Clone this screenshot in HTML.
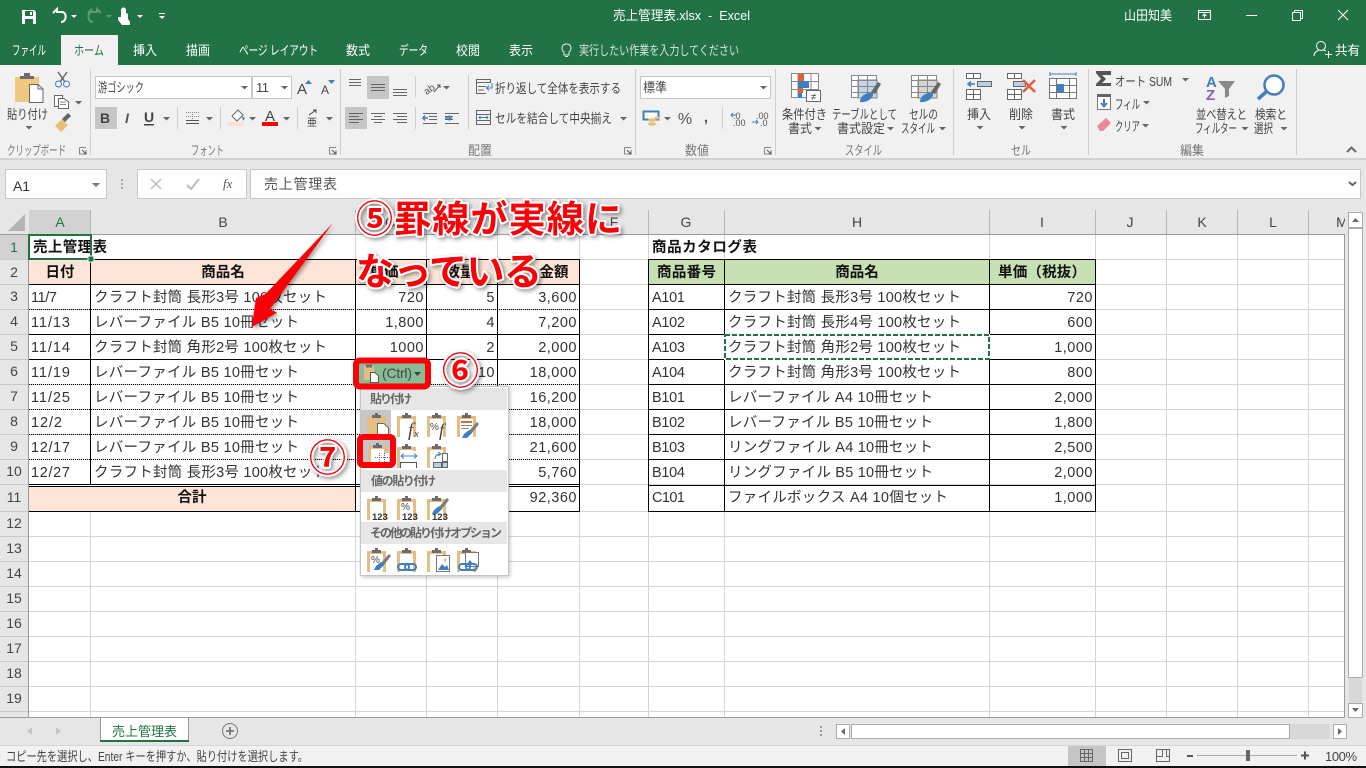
<!DOCTYPE html>
<html lang="ja"><head><meta charset="utf-8"><title>売上管理表.xlsx - Excel</title>
<style>
html,body{margin:0;padding:0;width:1366px;height:768px;overflow:hidden;background:#fff}
svg{display:block;position:absolute;left:0;top:0}
text{font-family:"Liberation Sans","Noto Sans CJK JP",sans-serif;white-space:pre}
.c{font-size:14.5px;fill:#333}
.b{font-size:14.5px;font-weight:700;fill:#111}
.m{text-anchor:middle}
.e{text-anchor:end;letter-spacing:.5px}
.h{font-size:14px;fill:#444;text-anchor:middle}
.r{font-size:13px;fill:#444}
.g{font-size:13px;fill:#777}
.w{font-size:13px;fill:#fff}
.p{font-size:12px;font-weight:700;fill:#666}
.an{font-weight:700;fill:#fb0007;stroke:#fff;stroke-width:4px;paint-order:stroke;stroke-linejoin:round;filter:drop-shadow(2px 2px 2px rgba(0,0,0,.4))}
.sep{stroke:#cfcfcf;stroke-width:1}
</style></head><body>
<svg width="1366" height="768" viewBox="0 0 1366 768" xmlns="http://www.w3.org/2000/svg">
<defs>
<polygon id="ar" points="-3.5,0 3.5,0 0,3.5" fill="#666"/>
<g id="cb"><rect x="0" y="3" width="19" height="21" fill="#e3bd84"/><rect x="3" y="6" width="13" height="18" fill="#fff"/><path d="M5 5V2H8V0H11V2H14V5Z" fill="#6b6b6b"/></g>
<g id="cbt"><rect x="0" y="3" width="19" height="21" fill="#e3bd84"/><path d="M5 5V2H8V0H11V2H14V5Z" fill="#6b6b6b"/></g>
<g id="br"><path d="M0 10L9 0L11 2L3 12Z" fill="#7a7a7a"/><path d="M-4 12L1 8L4 11L-1 16H-6Z" fill="#3f7fbf"/></g>
<g id="lk"><rect x="0" y="0" width="11" height="6" rx="3" fill="none" stroke="#3f7fbf" stroke-width="2"/><rect x="7" y="0" width="11" height="6" rx="3" fill="none" stroke="#3f7fbf" stroke-width="2"/></g>
</defs>

<!-- base -->
<rect width="1366" height="768" fill="#fff"/>
<rect width="1366" height="65" fill="#217346"/>
<rect y="65" width="1366" height="93" fill="#f1f1f1"/>
<rect y="158" width="1366" height="2" fill="#d2d2d2"/>
<rect y="160" width="1366" height="74" fill="#e6e6e6"/>

<!-- title bar -->
<path d="M22 10H34L36 12V24H22ZM25 11V16H33V11ZM25 19V24H33V19ZM30 12H32V15H30Z" fill-rule="evenodd" fill="#fff"/>
<path d="M53 13L57 9V12H62C67 12 67 22 61 22" fill="none" stroke="#fff" stroke-width="2"/>
<polygon points="71,15 77,15 74,18" fill="#fff"/>
<path d="M88 13L92 9" fill="none" stroke="#5d9a78" stroke-width="2"/><path d="M101 13L97 9V12H92C87 12 87 22 93 22" fill="none" stroke="#5d9a78" stroke-width="2"/>
<polygon points="106,15 112,15 109,18" fill="#5d9a78"/>
<path d="M121 17V10a2.5 2.5 0 0 1 5 0V13L128 14V19L130 22V25H122L118 20V17Z" fill="#fff"/>
<polygon points="137,15 143,15 140,18" fill="#fff"/>
<rect x="159" y="13" width="6" height="1" fill="#fff"/><polygon points="159,16 165,16 162,19" fill="#fff"/>
<text x="613" y="20" class="w" textLength="137" lengthAdjust="spacingAndGlyphs">売上管理表.xlsx  -  Excel</text>
<text x="1124" y="20" class="w" textLength="48" lengthAdjust="spacingAndGlyphs">山田知美</text>
<g fill="none" stroke="#fff" stroke-width="1">
<rect x="1198.500" y="10.500" width="12" height="9"/><path d="M1198 12.500H1211M1204.500 18V14.500M1202.500 16L1204.500 14L1206.500 16"/>
<path d="M1246 15.500H1257"/>
<rect x="1292.500" y="12.500" width="8" height="8"/><path d="M1294.500 12V10.500H1302.500V18.500H1301"/>
<path d="M1338 10L1348 20M1348 10L1338 20"/>
</g>

<!-- tabs -->
<rect x="61" y="35" width="57" height="30" fill="#f1f1f1"/>
<text x="12" y="55" class="w" textLength="34" lengthAdjust="spacingAndGlyphs">ファイル</text>
<text x="74" y="55" class="r" style="fill:#217346" textLength="30" lengthAdjust="spacingAndGlyphs">ホーム</text>
<text x="133" y="55" class="w" textLength="24" lengthAdjust="spacingAndGlyphs">挿入</text>
<text x="186" y="55" class="w" textLength="24" lengthAdjust="spacingAndGlyphs">描画</text>
<text x="239" y="55" class="w" textLength="79" lengthAdjust="spacingAndGlyphs">ページ レイアウト</text>
<text x="346" y="55" class="w" textLength="24" lengthAdjust="spacingAndGlyphs">数式</text>
<text x="399" y="55" class="w" textLength="29" lengthAdjust="spacingAndGlyphs">データ</text>
<text x="456" y="55" class="w" textLength="24" lengthAdjust="spacingAndGlyphs">校閲</text>
<text x="509" y="55" class="w" textLength="24" lengthAdjust="spacingAndGlyphs">表示</text>
<text x="579" y="55" class="w" style="fill:#d3e4da" textLength="160" lengthAdjust="spacingAndGlyphs">実行したい作業を入力してください</text>
<text x="1335" y="55" class="w" textLength="25" lengthAdjust="spacingAndGlyphs">共有</text>
<path d="M564 55V52C561 50 561 44 566.500 44C572 44 572 50 569 52V55ZM565 56.500H568" fill="none" stroke="#e6f0ea" stroke-width="1"/>
<g fill="none" stroke="#fff" stroke-width="1"><circle cx="1321" cy="46" r="4.500"/><path d="M1314 56C1314 52 1317 51 1319 50M1323 50L1326 51M1325 54.500H1332M1328.500 51V58"/></g>

<!-- ribbon separators -->
<g class="sep" shape-rendering="crispEdges">
<path d="M90.500 69V155M340.500 69V155M635.500 69V155M775.500 69V155M953.500 69V155M1088.500 69V155M1296.500 69V155"/>
<path d="M177.500 107V129M220.500 107V129M297.500 107V129M415.500 76V98M415.500 107V129M468.500 75V130M722.500 107V129"/>
</g>

<!-- clipboard group -->
<rect x="15" y="77" width="24" height="25" fill="#f0c97f"/>
<path d="M20 79V76H24V73H30V76H34V79Z" fill="#6b6b6b"/>
<path d="M29.500 84.500H38L43 89V102.500H29.500Z" fill="#fff" stroke="#666"/>
<path d="M38 84.500V89H43" fill="none" stroke="#666"/>
<text x="7" y="119" class="r" textLength="41" lengthAdjust="spacingAndGlyphs">貼り付け</text>
<use href="#ar" x="29" y="126"/>
<g fill="none" stroke="#666"><path d="M58 72L65 82M67 72L60 82" stroke-width="1.500"/><circle cx="58.500" cy="84" r="3" stroke="#3f7fbf"/><circle cx="66.500" cy="84" r="3" stroke="#3f7fbf"/></g>
<g fill="#fff" stroke="#666"><rect x="54.500" y="95.500" width="8" height="11"/><path d="M58.500 98.500H64L68.500 102V108.500H58.500Z"/><path d="M60 102H66M60 104.500H66" stroke-width=".8"/></g>
<use href="#ar" x="78.500" y="101"/>
<path d="M55 126L62 119L68 125L61 132Z" fill="#e8bf7a"/><path d="M62 119L68 113L71 116L65 122Z" fill="#666"/>
<text x="7" y="155" class="g" textLength="59" lengthAdjust="spacingAndGlyphs">クリップボード</text>
<g id="lnch" fill="none" stroke="#888"><path d="M79.500 147.500H86M79.500 147.500V154H86V150"/><path d="M82 150L86 154M83.500 154H86V151.500" stroke="#555"/></g>
<use href="#lnch" x="250"/><use href="#lnch" x="545"/><use href="#lnch" x="685"/>

<!-- font group -->
<rect x="95.500" y="76.500" width="156" height="22" fill="#fff" stroke="#c6c6c6"/>
<rect x="252.500" y="76.500" width="39" height="22" fill="#fff" stroke="#c6c6c6"/>
<text x="98" y="92" class="r" textLength="46" lengthAdjust="spacingAndGlyphs">游ゴシック</text>
<use href="#ar" x="244.500" y="86"/>
<text x="256" y="92" class="r" style="font-size:13px" textLength="13">11</text>
<use href="#ar" x="284.500" y="86"/>
<text x="297" y="94" style="font-size:15px;fill:#444">A</text><polygon points="305,84 312,84 308.500,80" fill="#3f7fbf"/>
<text x="321" y="94" style="font-size:12px;fill:#444">A</text><polygon points="328,80 335,80 331.500,84" fill="#3f7fbf"/>
<rect x="95" y="107" width="22" height="22" fill="#c6c6c6"/>
<text x="105" y="123" class="m" style="font-size:14px;font-weight:700;fill:#444">B</text>
<text x="127" y="123" class="m" style="font-size:14px;font-style:italic;font-weight:700;fill:#555">I</text>
<text x="149" y="122" class="m" style="font-size:14px;font-weight:700;fill:#444">U</text><rect x="144" y="124" width="10" height="1.500" fill="#444"/>
<use href="#ar" x="166.500" y="117"/>
<g fill="none" stroke="#888" stroke-dasharray="1 1"><path d="M186 112.500H199M186 116.500H199M192.500 112V120"/></g><path d="M186 120.500H199M186 123.500H199" stroke="#555" fill="none"/>
<use href="#ar" x="209.500" y="117"/>
<path d="M232 116L238 110L243 115L237 121Z" fill="#fff" stroke="#666"/><path d="M242 116L245 118L243 121Z" fill="#3f7fbf"/><rect x="228" y="122" width="16" height="4" fill="#fbe1d2"/>
<use href="#ar" x="252.500" y="117"/>
<text x="270" y="121" class="m" style="font-size:15px;fill:#444">A</text><rect x="262" y="122" width="16" height="4" fill="#f00"/>
<use href="#ar" x="286.500" y="117"/>
<text x="312" y="126" class="m" style="font-size:10px;fill:#444">亜</text><path d="M309 115L316 110M313 110H316V113" fill="none" stroke="#444"/>
<use href="#ar" x="329.500" y="117"/>
<text x="191" y="155" class="g" textLength="33" lengthAdjust="spacingAndGlyphs">フォント</text>

<!-- alignment -->
<rect x="367" y="76" width="22" height="23" fill="#c6c6c6"/>
<rect x="345" y="107" width="22" height="22" fill="#c6c6c6"/>
<g stroke="#666" fill="none" shape-rendering="crispEdges">
<path d="M349 79.500H361M349 82.500H361M349 85.500H361"/>
<path d="M371 84.500H385M371 87.500H385M371 90.500H385"/>
<path d="M393 89.500H407M393 92.500H407M393 95.500H407"/>
<path d="M349 113.500H363M349 116.500H359M349 119.500H363M349 122.500H359"/>
<path d="M371 113.500H385M374 116.500H382M371 119.500H385M374 122.500H382"/>
<path d="M393 113.500H407M397 116.500H407M393 119.500H407M397 122.500H407"/>
<path d="M423 113.500H437M429 116.500H437M429 119.500H437M423 123.500H437"/>
<path d="M445 113.500H459M445 116.500H453M445 119.500H453M445 123.500H459"/>
</g>
<path d="M423 118H428M425 115.500L423 118L425 120.500" fill="none" stroke="#3f7fbf" stroke-width="1.500"/>
<path d="M445 118H451M449 115.500L451 118L449 120.500" fill="none" stroke="#3f7fbf" stroke-width="1.500"/>
<text x="423" y="92" style="font-size:10px;fill:#555" transform="rotate(-35 430 88)">ab</text><path d="M434 92L440 85M437 85H440V88" fill="none" stroke="#555"/>
<use href="#ar" x="446.500" y="86"/>
<g fill="none" stroke="#666"><rect x="476.500" y="79.500" width="14" height="3"/><path d="M476.500 82.500V93.500H486M478 86.500H486M478 90H484"/></g><path d="M492 83V88H487M489 85.500L486.500 88L489 90.500" fill="none" stroke="#3f7fbf"/>
<text x="495" y="93" class="r" textLength="126" lengthAdjust="spacingAndGlyphs">折り返して全体を表示する</text>
<g fill="none" stroke="#666"><rect x="476.500" y="110.500" width="14" height="14"/><path d="M476.500 114.500H490.500M476.500 120.500H490.500"/></g><path d="M479 117.500H488M480.500 116L479 117.500L480.500 119M486.500 116L488 117.500L486.500 119" fill="none" stroke="#3f7fbf"/>
<text x="495" y="123" class="r" textLength="117" lengthAdjust="spacingAndGlyphs">セルを結合して中央揃え</text>
<use href="#ar" x="623.500" y="117"/>
<text x="468" y="155" class="g" textLength="24" lengthAdjust="spacingAndGlyphs">配置</text>

<!-- number -->
<rect x="640.500" y="76.500" width="130" height="22" fill="#fff" stroke="#c6c6c6"/>
<text x="643" y="92" class="r" textLength="24" lengthAdjust="spacingAndGlyphs">標準</text>
<use href="#ar" x="763.500" y="86"/>
<rect x="643.500" y="111.500" width="15" height="8" fill="#fff" stroke="#3f7fbf" stroke-width="2"/>
<ellipse cx="652" cy="120" rx="4" ry="1.800" fill="#e8bf7a"/><ellipse cx="652" cy="124" rx="4" ry="1.800" fill="#e8bf7a"/><ellipse cx="657" cy="118" rx="3" ry="1.500" fill="#e8bf7a"/>
<use href="#ar" x="667.500" y="117"/>
<text x="685" y="124" class="m" style="font-size:16px;fill:#555">%</text>
<text x="706" y="122" class="m" style="font-size:15px;font-weight:700;fill:#555">,</text>
<text x="733" y="119" style="font-size:9px;fill:#555">.0</text><text x="733" y="126" style="font-size:9px;fill:#555">.00</text>
<text x="756" y="119" style="font-size:9px;fill:#555">.00</text><text x="760" y="126" style="font-size:9px;fill:#555">.0</text>
<path d="M731 115H737M733 113L731 115L733 117" fill="none" stroke="#3f7fbf"/><path d="M752 122H758M756 120L758 122L756 124" fill="none" stroke="#3f7fbf"/>
<text x="685" y="155" class="g" textLength="24" lengthAdjust="spacingAndGlyphs">数値</text>

<!-- styles -->
<g stroke="#888" fill="#fff" stroke-width="1" shape-rendering="crispEdges"><rect x="791.500" y="73.500" width="27" height="24"/><path d="M791 81.500H819M791 89.500H819M798 73V98M811 73V98" fill="none"/></g>
<rect x="798" y="74" width="6" height="7" fill="#e0603c"/><rect x="798" y="81" width="11" height="7" fill="#3f7fbf"/><rect x="798" y="88" width="5" height="5" fill="#e0603c"/><rect x="798" y="93" width="4" height="5" fill="#3f7fbf"/>
<rect x="806.500" y="90.500" width="14" height="11" fill="#fff" stroke="#666"/><text x="813.500" y="100" class="m" style="font-size:10px;fill:#444">≠</text>
<text x="782" y="119" class="r" textLength="45" lengthAdjust="spacingAndGlyphs">条件付き</text>
<text x="788" y="133" class="r" textLength="24" lengthAdjust="spacingAndGlyphs">書式</text><use href="#ar" x="818" y="127"/>
<g stroke="#888" fill="#fff" shape-rendering="crispEdges"><rect x="851.500" y="75.500" width="25" height="22"/><rect x="858" y="80" width="19" height="18" fill="#c5d5e8"/><path d="M851 80.500H877M851 86.500H877M851 92.500H877M858.500 75V98M867.500 75V98" fill="none"/></g>
<path d="M871 92L878 82L881 84L875 94Z" fill="#666"/><path d="M860 102C860 96 866 92 873 93C874 98 867 103 860 102Z" fill="#3f7fbf"/>
<text x="832" y="119" class="r" textLength="65" lengthAdjust="spacingAndGlyphs">テーブルとして</text>
<text x="837" y="133" class="r" textLength="48" lengthAdjust="spacingAndGlyphs">書式設定</text><use href="#ar" x="890.500" y="127"/>
<g stroke="#888" fill="#fff" shape-rendering="crispEdges"><rect x="911.500" y="75.500" width="25" height="22"/><rect x="918" y="80" width="19" height="18" fill="#d5d5d5"/><path d="M911 80.500H937M911 86.500H937M911 92.500H937M918.500 75V98M927.500 75V98" fill="none"/></g>
<path d="M931 92L938 82L941 84L935 94Z" fill="#666"/><path d="M920 102C920 96 926 92 933 93C934 98 927 103 920 102Z" fill="#3f7fbf"/>
<text x="909" y="119" class="r" textLength="29" lengthAdjust="spacingAndGlyphs">セルの</text>
<text x="901" y="133" class="r" textLength="34" lengthAdjust="spacingAndGlyphs">スタイル</text><use href="#ar" x="942.500" y="127"/>
<text x="845" y="155" class="g" textLength="37" lengthAdjust="spacingAndGlyphs">スタイル</text>

<!-- cells -->
<g fill="#fff" stroke="#666" shape-rendering="crispEdges"><rect x="966.500" y="73.500" width="14" height="5"/><path d="M973.500 73V78" fill="none"/><rect x="966.500" y="89.500" width="14" height="10"/><path d="M966 94.500H981M973.500 89V100" fill="none"/><rect x="977.500" y="81.500" width="14" height="5" fill="#bcd0e5"/></g>
<path d="M968 84H975M971 81.500L968 84L971 86.500" fill="none" stroke="#3f7fbf" stroke-width="1.500"/>
<text x="967" y="119" class="r" textLength="24" lengthAdjust="spacingAndGlyphs">挿入</text><use href="#ar" x="980" y="126"/>
<g fill="#fff" stroke="#666" shape-rendering="crispEdges"><rect x="1007.500" y="73.500" width="14" height="5"/><path d="M1014.500 73V78" fill="none"/><rect x="1007.500" y="89.500" width="14" height="10"/><path d="M1007 94.500H1022M1014.500 89V100" fill="none"/><rect x="1013.500" y="81.500" width="12" height="5" fill="#bcd0e5"/></g>
<path d="M1023 80L1035 92M1035 80L1023 92" stroke="#e0603c" stroke-width="2.500" fill="none"/>
<text x="1009" y="119" class="r" textLength="24" lengthAdjust="spacingAndGlyphs">削除</text><use href="#ar" x="1022" y="126"/>
<g fill="#fff" stroke="#777" shape-rendering="crispEdges"><rect x="1049.500" y="78.500" width="27" height="20"/><path d="M1056.500 78V99M1069.500 78V99M1049 85.500H1077M1049 92.500H1077" fill="none"/></g>
<rect x="1057" y="84" width="7" height="9" fill="#3f7fbf"/>
<path d="M1050 74H1076M1050 72V76M1076 72V76" stroke="#3f7fbf" fill="none"/>
<text x="1051" y="119" class="r" textLength="24" lengthAdjust="spacingAndGlyphs">書式</text><use href="#ar" x="1064" y="126"/>
<text x="1011" y="155" class="g" textLength="20" lengthAdjust="spacingAndGlyphs">セル</text>

<!-- editing -->
<path d="M1096 71H1111V75H1102L1106 79L1102 83H1111V86H1096V84L1101 79L1096 73Z" fill="#555"/>
<text x="1115" y="86" class="r" textLength="57" lengthAdjust="spacingAndGlyphs">オート SUM</text><use href="#ar" x="1185.500" y="78"/>
<rect x="1097.500" y="94.500" width="13" height="15" fill="#fff" stroke="#777"/><rect x="1097" y="94" width="14" height="3" fill="#666"/><path d="M1104 99V106M1101 103L1104 106.500L1107 103" fill="none" stroke="#3f7fbf" stroke-width="2"/>
<text x="1115" y="109" class="r" textLength="25" lengthAdjust="spacingAndGlyphs">フィル</text><use href="#ar" x="1146.500" y="101"/>
<path d="M1097 126L1106 118L1111 123L1103 131H1100Z" fill="#e8889a"/>
<text x="1115" y="131" class="r" textLength="25" lengthAdjust="spacingAndGlyphs">クリア</text><use href="#ar" x="1145.500" y="124"/>
<text x="1206" y="87" style="font-size:15px;font-weight:700;fill:#3f7fbf">A</text><text x="1206" y="100" style="font-size:15px;font-weight:700;fill:#8c5fb0">Z</text>
<path d="M1218 81H1235L1229 89V96L1225 98V89Z" fill="#8a8a8a"/>
<text x="1196" y="119" class="r" textLength="51" lengthAdjust="spacingAndGlyphs">並べ替えと</text>
<text x="1195" y="133" class="r" textLength="42" lengthAdjust="spacingAndGlyphs">フィルター</text><use href="#ar" x="1245" y="127"/>
<circle cx="1274" cy="85" r="9.500" fill="#fff" stroke="#3f7fbf" stroke-width="2.500"/><path d="M1266 92L1258 99" stroke="#3f7fbf" stroke-width="3.500" fill="none"/>
<text x="1255" y="119" class="r" textLength="32" lengthAdjust="spacingAndGlyphs">検索と</text>
<text x="1254" y="133" class="r" textLength="19" lengthAdjust="spacingAndGlyphs">選択</text><use href="#ar" x="1284" y="127"/>
<text x="1180" y="155" class="g" textLength="24" lengthAdjust="spacingAndGlyphs">編集</text>
<path d="M1347 152L1351.500 147.500L1356 152" fill="none" stroke="#666" stroke-width="2"/>

<!-- formula bar -->
<rect x="5.500" y="169.500" width="101" height="29" fill="#fff" stroke="#c6c6c6"/>
<text x="13" y="191" style="font-size:14px;fill:#333" textLength="17">A1</text>
<polygon points="92,183 100,183 96,187" fill="#777"/>
<g fill="#aaa"><rect x="121" y="179" width="2" height="2"/><rect x="121" y="183" width="2" height="2"/><rect x="121" y="187" width="2" height="2"/></g>
<rect x="137.500" y="169.500" width="109" height="29" fill="#fff" stroke="#c6c6c6"/>
<rect x="250.500" y="169.500" width="1110" height="29" fill="#fff" stroke="#c6c6c6"/>
<path d="M151 179L161 189M161 179L151 189" stroke="#bbb" stroke-width="1.500" fill="none"/>
<path d="M187 185L191 189L199 179" stroke="#bbb" stroke-width="2" fill="none"/>
<text x="223" y="188" style="font-family:'Liberation Serif',serif;font-size:13px;font-style:italic;fill:#555">fx</text>
<text x="264" y="189" style="font-size:14px;fill:#555" textLength="73">売上管理表</text>
<path d="M1349 182L1352.500 185L1356 182" fill="none" stroke="#666" stroke-width="2"/>

<!-- headers -->
<rect x="0" y="210" width="1345" height="24" fill="#e6e6e6"/>
<rect x="29" y="210" width="61" height="24" fill="#d2d2d2"/>
<rect x="0" y="234" width="28" height="483" fill="#e6e6e6"/>
<rect x="0" y="235" width="28" height="24" fill="#d2d2d2"/>
<polygon points="25,214 25,231 8,231" fill="#b4b4b4"/>

<!-- gridlines -->
<g stroke="#d4d4d4" shape-rendering="crispEdges">
<path d="M29 259.500H1345M29 284.500H1345M29 309.500H1345M29 334.500H1345M29 359.500H1345M29 384.500H1345M29 409.500H1345M29 434.500H1345M29 459.500H1345M29 484.500H1345M29 511.500H1345M29 536.500H1345M29 561.500H1345M29 586.500H1345M29 611.500H1345M29 636.500H1345M29 661.500H1345M29 686.500H1345M29 711.500H1345"/>
<path d="M90.500 235V717M355.500 235V717M426.500 235V717M497.500 235V717M579.500 235V717M648.500 235V717M724.500 235V717M989.500 235V717M1095.500 235V717M1166.500 235V717M1237.500 235V717M1308.500 235V717"/>
</g>
<g stroke="#c8c8c8" shape-rendering="crispEdges">
<path d="M0 259.500H28M0 284.500H28M0 309.500H28M0 334.500H28M0 359.500H28M0 384.500H28M0 409.500H28M0 434.500H28M0 459.500H28M0 484.500H28M0 511.500H28M0 536.500H28M0 561.500H28M0 586.500H28M0 611.500H28M0 636.500H28M0 661.500H28M0 686.500H28M0 711.500H28"/>
</g>
<g stroke="#b4b4b4" shape-rendering="crispEdges"><path d="M90.500 210V234M355.500 210V234M426.500 210V234M497.500 210V234M579.500 210V234M648.500 210V234M724.500 210V234M989.500 210V234M1095.500 210V234M1166.500 210V234M1237.500 210V234M1308.500 210V234"/></g>
<path d="M0 234.500H1345M28.500 234V717M0 717.500H1345M1344.500 234V717" stroke="#9a9a9a" fill="none" shape-rendering="crispEdges"/>

<!-- col labels -->
<text x="60" y="227" class="h" style="fill:#217346">A</text><text x="223" y="227" class="h">B</text><text x="390" y="227" class="h">C</text><text x="461" y="227" class="h">D</text><text x="538" y="227" class="h">E</text><text x="614" y="227" class="h">F</text><text x="686" y="227" class="h">G</text><text x="857" y="227" class="h">H</text><text x="1042" y="227" class="h">I</text><text x="1130" y="227" class="h">J</text><text x="1202" y="227" class="h">K</text><text x="1273" y="227" class="h">L</text><text x="1342" y="227" class="h">M</text>
<!-- row labels -->
<text x="14" y="252" class="h" style="fill:#217346">1</text><text x="14" y="277" class="h">2</text><text x="14" y="301" class="h">3</text><text x="14" y="326" class="h">4</text><text x="14" y="351" class="h">5</text><text x="14" y="376" class="h">6</text><text x="14" y="401" class="h">7</text><text x="14" y="426" class="h">8</text><text x="14" y="451" class="h">9</text><text x="14" y="476" class="h">10</text><text x="14" y="502" class="h">11</text><text x="14" y="528" class="h">12</text><text x="14" y="553" class="h">13</text><text x="14" y="578" class="h">14</text><text x="14" y="603" class="h">15</text><text x="14" y="628" class="h">16</text><text x="14" y="653" class="h">17</text><text x="14" y="678" class="h">18</text><text x="14" y="703" class="h">19</text>

<!-- table fills -->
<rect x="29" y="260" width="550" height="24" fill="#fce4d6"/>
<rect x="29" y="485" width="550" height="26" fill="#fff"/>
<rect x="29" y="486" width="326" height="25" fill="#fce4d6"/>
<rect x="648" y="260" width="447" height="24" fill="#c6e0b4"/>

<!-- table borders -->
<g stroke="#000" fill="none" shape-rendering="crispEdges">
<path d="M29 259.500H580M29 284.500H580M29 334.500H580M29 359.500H580M29 484.500H580M29 486.500H580M29 511.500H580"/>
<path d="M29 309.500H580M29 384.500H580M29 409.500H580M29 434.500H580M29 459.500H580" stroke-dasharray="1 1"/>
<path d="M90.500 259V485M355.500 259V511M426.500 259V485M497.500 259V511M579.500 259V511"/>
<path d="M648 259.500H1096M648 284.500H1096M648 309.500H1096M648 334.500H1096M648 359.500H1096M648 384.500H1096M648 409.500H1096M648 434.500H1096M648 459.500H1096M648 485.500H1096M648 511.500H1096"/>
<path d="M648.500 259V512M724.500 259V512M989.500 259V512M1095.500 259V512"/>
</g>

<!-- table1 text -->
<text x="33" y="252" class="b" textLength="74">売上管理表</text>
<text x="60" y="277" class="b m">日付</text><text x="223" y="277" class="b m">商品名</text><text x="384" y="277" class="b m">単価</text><text x="460" y="277" class="b m">数量</text><text x="554" y="277" class="b m">金額</text>

<text x="31" y="302" class="c" textLength="26">11/7</text><text x="94" y="302" class="c" textLength="233">クラフト封筒 長形3号 100枚セット</text><text x="424" y="302" class="c e">720</text><text x="495" y="302" class="c e">5</text><text x="577" y="302" class="c e">3,600</text>
<text x="31" y="327" class="c" textLength="39">11/13</text><text x="94" y="327" class="c" textLength="205">レバーファイル B5 10冊セット</text><text x="424" y="327" class="c e">1,800</text><text x="495" y="327" class="c e">4</text><text x="577" y="327" class="c e">7,200</text>
<text x="31" y="352" class="c" textLength="39">11/14</text><text x="94" y="352" class="c" textLength="233">クラフト封筒 角形2号 100枚セット</text><text x="424" y="352" class="c e">1000</text><text x="495" y="352" class="c e">2</text><text x="577" y="352" class="c e">2,000</text>
<text x="31" y="377" class="c" textLength="39">11/19</text><text x="94" y="377" class="c" textLength="205">レバーファイル B5 10冊セット</text><text x="495" y="377" class="c e">10</text><text x="577" y="377" class="c e">18,000</text>
<text x="31" y="402" class="c" textLength="39">11/25</text><text x="94" y="402" class="c" textLength="205">レバーファイル B5 10冊セット</text><text x="577" y="402" class="c e">16,200</text>
<text x="31" y="427" class="c" textLength="31">12/2</text><text x="94" y="427" class="c" textLength="205">レバーファイル B5 10冊セット</text><text x="577" y="427" class="c e">18,000</text>
<text x="31" y="452" class="c" textLength="39">12/17</text><text x="94" y="452" class="c" textLength="205">レバーファイル B5 10冊セット</text><text x="577" y="452" class="c e">21,600</text>
<text x="31" y="477" class="c" textLength="39">12/27</text><text x="94" y="477" class="c" textLength="233">クラフト封筒 長形3号 100枚セット</text><text x="577" y="477" class="c e">5,760</text>
<text x="192" y="502" class="b m">合計</text><text x="577" y="502" class="c e">92,360</text>

<!-- table2 text -->
<text x="652" y="252" class="b" textLength="105">商品カタログ表</text>
<text x="657" y="277" class="b" textLength="59">商品番号</text><text x="857" y="277" class="b m">商品名</text><text x="998" y="277" class="b" textLength="88">単価（税抜）</text>
<text x="652" y="302" class="c" textLength="33">A101</text><text x="728" y="302" class="c" textLength="233">クラフト封筒 長形3号 100枚セット</text><text x="1093" y="302" class="c e">720</text>
<text x="652" y="327" class="c" textLength="33">A102</text><text x="728" y="327" class="c" textLength="233">クラフト封筒 長形4号 100枚セット</text><text x="1093" y="327" class="c e">600</text>
<text x="652" y="352" class="c" textLength="33">A103</text><text x="728" y="352" class="c" textLength="233">クラフト封筒 角形2号 100枚セット</text><text x="1093" y="352" class="c e">1,000</text>
<text x="652" y="377" class="c" textLength="33">A104</text><text x="728" y="377" class="c" textLength="233">クラフト封筒 角形3号 100枚セット</text><text x="1093" y="377" class="c e">800</text>
<text x="652" y="402" class="c" textLength="33">B101</text><text x="728" y="402" class="c" textLength="205">レバーファイル A4 10冊セット</text><text x="1093" y="402" class="c e">2,000</text>
<text x="652" y="427" class="c" textLength="33">B102</text><text x="728" y="427" class="c" textLength="205">レバーファイル B5 10冊セット</text><text x="1093" y="427" class="c e">1,800</text>
<text x="652" y="452" class="c" textLength="33">B103</text><text x="728" y="452" class="c" textLength="205">リングファイル A4 10冊セット</text><text x="1093" y="452" class="c e">2,500</text>
<text x="652" y="477" class="c" textLength="33">B104</text><text x="728" y="477" class="c" textLength="205">リングファイル B5 10冊セット</text><text x="1093" y="477" class="c e">2,000</text>
<text x="652" y="502" class="c" textLength="33">C101</text><text x="728" y="502" class="c" textLength="220">ファイルボックス A4 10個セット</text><text x="1093" y="502" class="c e">1,000</text>

<!-- selection and marching ants -->
<rect x="29" y="235" width="62" height="24" fill="none" stroke="#217346" stroke-width="2"/>
<rect x="88" y="256" width="6" height="6" fill="#217346" stroke="#fff"/>
<rect x="725" y="335" width="264" height="24" fill="none" stroke="#fff" stroke-width="2"/>
<rect x="725" y="335" width="264" height="24" fill="none" stroke="#217346" stroke-width="2" stroke-dasharray="5 2"/>

<!-- vertical scrollbar -->
<rect x="1345" y="210" width="21" height="508" fill="#e6e6e6"/>
<rect x="1348.500" y="212.500" width="14" height="15" fill="#fff" stroke="#ababab"/>
<polygon points="1352,222 1359,222 1355.500,218" fill="#666"/>
<rect x="1348.500" y="228.500" width="14" height="449" fill="#fff" stroke="#ababab"/>
<rect x="1349" y="678" width="13" height="25" fill="#d8d8d8"/>
<rect x="1348.500" y="703.500" width="14" height="14" fill="#fff" stroke="#ababab"/>
<polygon points="1352,708 1359,708 1355.500,712" fill="#666"/>

<!-- sheet tabs -->
<rect x="0" y="718" width="1366" height="27" fill="#e6e6e6"/>
<path d="M0 717.500H1345" stroke="#9a9a9a" shape-rendering="crispEdges"/>
<polygon points="32,727 32,735 27,731" fill="#c4c4c4"/><polygon points="56,727 56,735 61,731" fill="#c4c4c4"/>
<path d="M100.500 742V717.500H188.500V742" fill="#fff" stroke="#9a9a9a" shape-rendering="crispEdges"/>
<rect x="100" y="740" width="89" height="2" fill="#217346"/>
<text x="112" y="736" style="font-size:13px;fill:#217346" textLength="65">売上管理表</text>
<circle cx="230" cy="731" r="7.500" fill="none" stroke="#777"/><path d="M226 731H234M230 727V735" stroke="#666" stroke-width="1.500"/>
<g fill="#999"><rect x="820" y="726" width="2" height="2"/><rect x="820" y="730" width="2" height="2"/><rect x="820" y="734" width="2" height="2"/></g>
<rect x="836.500" y="724.500" width="13" height="14" fill="#fff" stroke="#ababab"/><polygon points="845,728 845,735 841,731.500" fill="#666"/>
<rect x="851" y="724" width="479" height="15" fill="#d8d8d8"/>
<rect x="851.500" y="724.500" width="438" height="14" fill="#fff" stroke="#ababab"/>
<rect x="1333.500" y="724.500" width="13" height="14" fill="#fff" stroke="#ababab"/><polygon points="1338,728 1338,735 1342,731.500" fill="#666"/>

<!-- status bar -->
<rect x="0" y="745" width="1366" height="21" fill="#f1f1f1"/>
<path d="M0 745.500H1366" stroke="#d4d4d4" shape-rendering="crispEdges"/>
<rect x="0" y="766" width="1366" height="2" fill="#111"/>
<text x="6" y="761" class="r" textLength="302" lengthAdjust="spacingAndGlyphs">コピー先を選択し、Enter キーを押すか、貼り付けを選択します。</text>
<rect x="1068" y="746" width="38" height="20" fill="#c6c6c6"/>
<g fill="none" stroke="#666" shape-rendering="crispEdges"><rect x="1080.500" y="749.500" width="12" height="12"/><path d="M1084.500 749V762M1088.500 749V762M1080 753.500H1093M1080 757.500H1093"/>
<rect x="1118.500" y="749.500" width="13" height="12"/><rect x="1121.500" y="752.500" width="7" height="6"/>
<rect x="1156.500" y="749.500" width="13" height="12"/><path d="M1162.500 749V756.500H1156M1166.500 749V756.500H1170"/></g>
<rect x="1187" y="755" width="6" height="2" fill="#555"/>
<rect x="1197" y="755" width="100" height="1" fill="#aaa"/>
<rect x="1246" y="750" width="4" height="11" fill="#666"/>
<path d="M1301 755.500H1309M1305 751.500V759.500" stroke="#555" stroke-width="2"/>
<text x="1325" y="761" class="r" textLength="32">100%</text>

<!-- paste popup -->
<rect x="360.500" y="386.500" width="148" height="189" fill="#fff" stroke="#c4c4c4" style="filter:drop-shadow(1px 1px 2px rgba(0,0,0,.25))"/>
<rect x="361" y="388" width="146" height="22" fill="#e6e6e6"/><rect x="361" y="470" width="146" height="22" fill="#e6e6e6"/><rect x="361" y="522" width="146" height="22" fill="#e6e6e6"/>
<text x="370" y="403" class="p" textLength="42">貼り付け</text>
<text x="371" y="485" class="p" textLength="65">値の貼り付け</text>
<text x="370" y="537" class="p" textLength="132">その他の貼り付けオプション</text>
<rect x="361" y="410" width="30" height="25" fill="#c6c6c6"/>

<!-- row 1 -->
<use href="#cbt" x="367" y="413"/><path d="M377.500 423.500H384L388.500 428V435H377.500Z" fill="#fff" stroke="#666"/>
<use href="#cb" x="397" y="413"/><text x="408" y="436" style="font-family:'Liberation Serif',serif;font-style:italic;font-size:19px;fill:#444">f</text><text x="414" y="437" style="font-family:'Liberation Serif',serif;font-style:italic;font-size:11px;fill:#444">x</text>
<use href="#cb" x="427" y="413"/><text x="430" y="430" style="font-size:10px;fill:#444">%</text><text x="439" y="436" style="font-family:'Liberation Serif',serif;font-style:italic;font-size:18px;fill:#444">f</text>
<use href="#cb" x="457" y="413"/><rect x="461" y="421" width="11" height="2" fill="#d8684a"/><path d="M461 425.500H472M461 428.500H469" stroke="#888"/><use href="#br" x="468" y="422"/>
<!-- row 2 -->
<use href="#cb" x="397" y="444"/><rect x="403" y="451" width="20" height="17" fill="#fff"/><path d="M401 456H417M404 453.500L401 456L404 458.500M414 453.500L417 456L414 458.500" stroke="#3f7fbf" fill="none"/><path d="M400.500 468V462.500H416.500V468" stroke="#555" fill="none"/>
<use href="#cb" x="427" y="444"/><rect x="442.500" y="453.500" width="5" height="8" fill="#fff" stroke="#666"/><rect x="433.500" y="462.500" width="8" height="5" fill="#bcd0e5" stroke="#666"/><path d="M435 459C435 455 438 454 441 454M438 452L441 454L438 456" fill="none" stroke="#3f7fbf"/><rect x="442.500" y="462.500" width="5" height="5" fill="#bcd0e5" stroke="#666"/>
<!-- row 3 -->
<use href="#cb" x="367" y="496"/><text x="372" y="520" style="font-size:9.500px;font-weight:700;fill:#333">123</text>
<use href="#cb" x="397" y="496"/><text x="401" y="510" style="font-size:10px;fill:#444">%</text><text x="402" y="520" style="font-size:9.500px;font-weight:700;fill:#333">123</text>
<use href="#cb" x="427" y="496"/><use href="#br" x="438" y="498"/><text x="432" y="520" style="font-size:9.500px;font-weight:700;fill:#333">123</text>
<!-- row 4 -->
<use href="#cb" x="367" y="548"/><text x="371" y="563" style="font-size:10px;fill:#444">%</text><use href="#br" x="380" y="554"/>
<use href="#cb" x="397" y="548"/><use href="#lk" x="398" y="564"/>
<use href="#cb" x="427" y="548"/><rect x="436.500" y="555.500" width="13" height="16" fill="#fff" stroke="#777"/><path d="M438 570L442 564L445 567L447 565L449 570Z" fill="#3f7fbf"/><circle cx="445" cy="560" r="1.500" fill="#e8bf7a"/>
<use href="#cb" x="457" y="548"/><rect x="465.500" y="552.500" width="13" height="14" fill="#fff" stroke="#777"/><path d="M467 564L470 560L473 564Z" fill="#3f7fbf"/><use href="#lk" x="459" y="564"/>

<!-- red boxes -->
<rect x="356" y="360.500" width="72" height="26" rx="4" fill="#86bd94" stroke="#fb0007" stroke-width="6"/>
<rect x="364" y="366" width="10" height="14" fill="#e3bd84"/><rect x="366" y="364.500" width="6" height="3" fill="#6b6b6b"/><path d="M370.500 372.500H375L378.500 376V382.500H370.500Z" fill="#fff" stroke="#555"/>
<text x="382" y="378" style="font-size:14px;fill:#444" textLength="30">(Ctrl)</text><polygon points="414,372 421,372 417.500,376" fill="#444"/>
<rect x="363" y="440" width="27" height="22" fill="#c6c6c6"/>
<use href="#cb" x="368" y="443"/>
<rect x="375" y="453" width="14" height="14" fill="#fff"/><path d="M379.500 453V467M384.500 453V467M375 457.500H389" stroke="#666" stroke-dasharray="1 1"/>
<rect x="360" y="437" width="33" height="28" rx="3" fill="none" stroke="#fb0007" stroke-width="6"/>

<!-- arrow -->
<polygon points="333,223 270,309 277,312.700 251.700,327.300 256,298 265.500,294" fill="#fb0007" style="filter:drop-shadow(2px 2px 2px rgba(0,0,0,.4))"/>

<!-- annotations -->
<text x="356" y="232" class="an" style="font-size:37px" textLength="266">⑤罫線が実線に</text>
<text x="356" y="285" class="an" style="font-size:38px" textLength="186">なっている</text>
<text x="442" y="384" class="an" style="font-size:37px">⑥</text>
<text x="309" y="471" class="an" style="font-size:37px">⑦</text>
</svg>
</body></html>
